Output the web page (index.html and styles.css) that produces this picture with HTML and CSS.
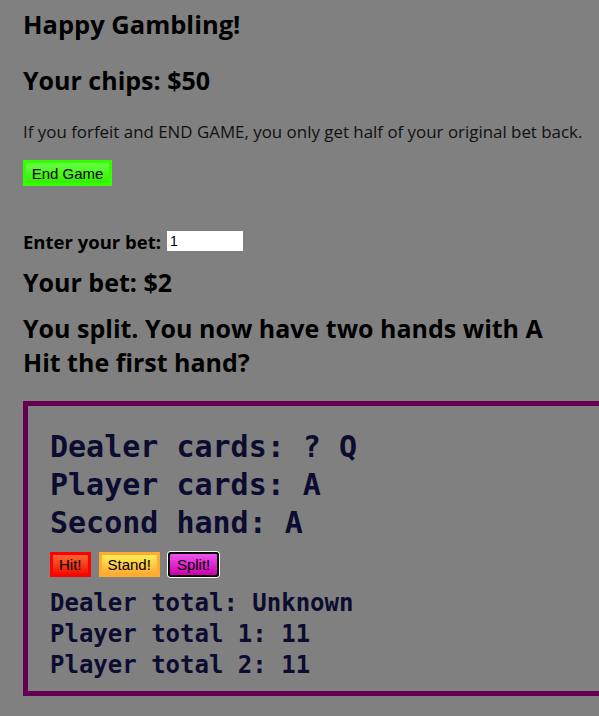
FILE: index.html
```html
<!DOCTYPE html>
<html>
<head>
<meta charset="utf-8">
<title>Blackjack</title>
<link rel="stylesheet" href="styles.css">
</head>
<body>
<h1 class="title">Happy Gambling!</h1>
<h2 class="chips">Your chips: $50</h2>
<p class="note">If you forfeit and END GAME, you only get half of your original bet back.</p>
<button class="btn btn-end">End Game</button>
<div class="bet-row"><label class="bet-label" for="bet">Enter your bet:</label> <input id="bet" class="bet-input" type="text" value="1"></div>
<h2 class="your-bet">Your bet: $2</h2>
<h2 class="status">You split. You now have two hands with A<br>Hit the first hand?</h2>
<div class="table">
  <div class="cards">
    <div>Dealer cards: ? Q</div>
    <div>Player cards: A</div>
    <div>Second hand: A</div>
  </div>
  <div class="actions">
    <button class="btn btn-hit">Hit!</button>
    <button class="btn btn-stand">Stand!</button>
    <button class="btn btn-split">Split!</button>
  </div>
  <div class="totals">
    <div>Dealer total: Unknown</div>
    <div>Player total 1: 11</div>
    <div>Player total 2: 11</div>
  </div>
</div>
</body>
</html>
```
FILE: styles.css
```css
html {
  background: #808080;
  overflow: hidden;
}
body {
  margin: 0;
  padding: 0 0 0 23px;
  font-family: "Open Sans", "Noto Sans", sans-serif;
  color: #000;
  overflow: hidden;
}
.title {
  margin: 9px 0 0;
  font-size: 25.5px;
  line-height: 30px;
  font-weight: 700;
}
.chips {
  margin: 26px 0 0;
  font-size: 25px;
  line-height: 30px;
  font-weight: 700;
}
.note {
  margin: 25px 0 0;
  font-size: 16.9px;
  line-height: 24px;
  color: #111;
}
.btn {
  font-family: "Liberation Sans", Arial, sans-serif;
  font-size: 15px;
  color: #000;
  padding: 0 6px;
  height: 25px;
  cursor: pointer;
  display: inline-block;
  vertical-align: top;
}
.btn-end {
  margin-top: 16px;
  width: 89px;
  height: 26px;
  padding: 0;
  border: 3px solid #33ff00;
  background: linear-gradient(#66ff44, #33ee00);
}
.bet-row {
  margin-top: 43px;
  height: 24px;
  display: flex;
  align-items: center;
}
.bet-label {
  font-weight: 700;
  font-size: 18.5px;
  margin-right: 6px;
}
.bet-input {
  width: 76px;
  height: 20px;
  box-sizing: border-box;
  border: none;
  background: #fff;
  padding: 0 3px;
  font-family: "Liberation Sans", Arial, sans-serif;
  font-size: 14px;
  color: #000;
}
.your-bet {
  margin: 14px 0 0;
  font-size: 25px;
  line-height: 30px;
  font-weight: 700;
}
.status {
  margin: 14px 0 0;
  font-size: 25px;
  line-height: 34px;
  font-weight: 700;
}
.table {
  margin-top: 22px;
  width: 700px;
  border: 5px solid #650050;
  padding: 22px 22px 10px;
  font-family: "DejaVu Sans Mono", "Liberation Mono", monospace;
  font-weight: 700;
  color: #0c0c30;
}
.cards {
  font-size: 30px;
  line-height: 38px;
}
.actions {
  margin-top: 10px;
  display: flex;
  gap: 8px;
  height: 25px;
}
.btn-hit {
  border: 3px solid #ff0000;
  background: linear-gradient(#ff6633, #ee1100);
}
.btn-stand {
  border: 3px solid #ffaa33;
  background: linear-gradient(#ffee55, #ffaa33);
}
.btn-split {
  padding: 0 7px;
  border: 2px solid #000;
  border-radius: 3px;
  box-shadow: 0 0 0 1px #fff;
  background: linear-gradient(#ee55ee, #cc00aa);
}
.totals {
  margin-top: 11px;
  font-size: 24px;
  line-height: 31px;
}
```
